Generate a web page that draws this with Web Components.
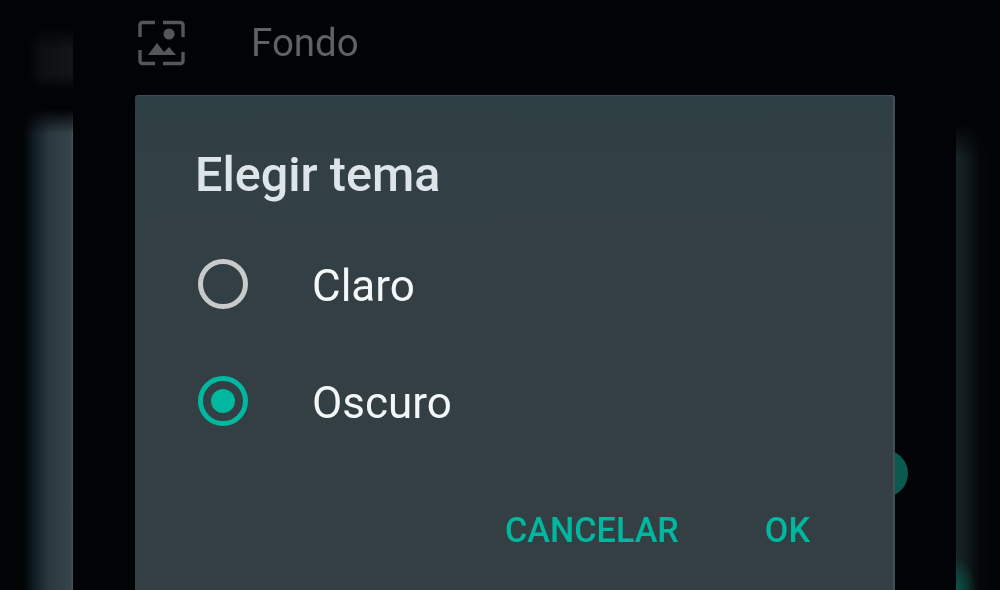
<!DOCTYPE html>
<html lang="es">
<head>
<meta charset="utf-8">
<title>Elegir tema</title>
<style>
  html, body { margin: 0; height: 100%; background: #020307; overflow: hidden; }
  body { font-family: Roboto, "Liberation Sans", sans-serif; }
</style>
</head>
<body>
<settings-screen>
  <setting-row slot="row" label="Fondo"></setting-row>
  <theme-dialog slot="dialog" heading="Elegir tema">
    <theme-option label="Claro"></theme-option>
    <theme-option label="Oscuro" checked></theme-option>
    <dialog-button slot="actions" label="CANCELAR"></dialog-button>
    <dialog-button slot="actions" label="OK"></dialog-button>
  </theme-dialog>
</settings-screen>

<script>
class SettingsScreen extends HTMLElement {
  constructor() {
    super();
    this.attachShadow({ mode: "open" });
    this.shadowRoot.innerHTML = `
      <style>
        :host {
          display: grid;
          grid-template-columns: 73px 1fr 44px;
          height: 590px;
          color: #fff;
        }
        .left {
          display: flex;
          flex-direction: column;
          padding-top: 28px;
        }
        .left .block {
          height: 62px;
          margin-bottom: 20px;
          background:
            linear-gradient(to bottom, #020307 0, rgba(2,3,7,0) 22px, rgba(2,3,7,0) 46px, #020307 62px),
            linear-gradient(to right, #020307 0, #020307 28px, #0d0f12 42px, #131518 100%);
        }
        .left .strip {
          flex: 1;
          background:
            linear-gradient(to bottom, #020307 0, rgba(2,3,7,0) 24px),
            linear-gradient(to right, #020307 0, #020504 24px, #14202a 36px, #2c3a40 50px, #35444a 71px, #4a5659 73px);
        }
        .center {
          display: flex;
          flex-direction: column;
          padding: 0 61px 0 62px;
          position: relative;
        }
        .right { padding-top: 125px; display: flex; }
        .right .strip {
          flex: 1;
          background:
            linear-gradient(to bottom, #020307 0, rgba(2,3,7,0) 32px),
            radial-gradient(ellipse 20px 34px at 0 100%, #0a5549 0, rgba(10,85,73,0) 100%),
            linear-gradient(to right, #182426 0, #0f181a 12px, #040708 24px, #020307 36px);
        }
        .dot {
          position: absolute;
          left: 789px;
          top: 450px;
          width: 46px;
          height: 47px;
          border-radius: 50%;
          background: #0b5a4f;
        }
        ::slotted(theme-dialog) { position: relative; flex: 1; }
      </style>
      <div class="left"><div class="block"></div><div class="strip"></div></div>
      <div class="center">
        <div class="dot"></div>
        <slot name="row"></slot>
        <slot name="dialog"></slot>
      </div>
      <div class="right"><div class="strip"></div></div>
    `;
  }
}
customElements.define("settings-screen", SettingsScreen);

class SettingRow extends HTMLElement {
  constructor() {
    super();
    this.attachShadow({ mode: "open" });
    this.shadowRoot.innerHTML = `
      <style>
        :host {
          display: flex;
          align-items: center;
          height: 95px;
          padding: 0 0 10px 0;
          box-sizing: border-box;
          color: #5f6163;
          font-size: 38.5px;
          filter: blur(0.7px);
        }
        svg { width: 48px; height: 48px; margin-left: 2px; flex: none; }
        span { margin-left: 66px; }
      </style>
      <svg viewBox="0 0 48 48">
        <g fill="none" stroke="#54575a" stroke-width="3.4">
          <path d="M3 18V6a2.5 2.5 0 0 1 2.5-2.5H18"/>
          <path d="M26 3.5H43.5A2.5 2.5 0 0 1 46 6V18"/>
          <path d="M3 31V42a2.5 2.5 0 0 0 2.5 2.5H18"/>
          <path d="M26 44.5H43.5A2.5 2.5 0 0 0 46 42V33"/>
        </g>
        <g fill="#54575a">
          <circle cx="32" cy="15" r="5.5"/>
          <path d="M11 36L20 24L27 33L32 28L39 36Z"/>
        </g>
      </svg>
      <span></span>
    `;
    this.shadowRoot.querySelector("span").textContent = this.getAttribute("label");
  }
}
customElements.define("setting-row", SettingRow);

class ThemeDialog extends HTMLElement {
  constructor() {
    super();
    this.attachShadow({ mode: "open" });
    this.shadowRoot.innerHTML = `
      <style>
        :host {
          display: flex;
          flex-direction: column;
          background: linear-gradient(to bottom, #2e4045 0, #323f44 60px, #343f43 100%);
          border-radius: 4px 4px 0 0;
          box-shadow: inset 0 1px 0 #3f4e52, inset -2px 0 0 #434f54;
          padding: 50px 0 0 60px;
          box-sizing: border-box;
        }
        h2 {
          margin: 0 0 22px;
          font-size: 48.5px;
          line-height: 60px;
          font-weight: 500;
          color: #dde5e9;
          filter: blur(0.6px);
        }
        .options { display: flex; flex-direction: column; }
        .actions {
          display: flex;
          justify-content: flex-end;
          gap: 86px;
          margin-top: 47px;
          padding-right: 85px;
        }
      </style>
      <h2></h2>
      <div class="options"><slot></slot></div>
      <div class="actions"><slot name="actions"></slot></div>
    `;
    this.shadowRoot.querySelector("h2").textContent = this.getAttribute("heading");
  }
}
customElements.define("theme-dialog", ThemeDialog);

class ThemeOption extends HTMLElement {
  constructor() {
    super();
    this.attachShadow({ mode: "open" });
    this.shadowRoot.innerHTML = `
      <style>
        :host {
          display: flex;
          align-items: center;
          height: 117px;
          font-size: 44px;
          color: #f4f7f8;
        }
        .radio {
          width: 50px;
          height: 50px;
          box-sizing: border-box;
          margin: 0 0 3px 3px;
          border: 5px solid #c8cbcc;
          border-radius: 50%;
          display: grid;
          place-items: center;
          filter: blur(0.7px);
        }
        :host([checked]) .radio { border-color: #00b8a0; }
        .dot { width: 24px; height: 24px; border-radius: 50%; background: #00b8a0; display: none; }
        :host([checked]) .dot { display: block; }
        span { margin-left: 64px; filter: blur(0.6px); }
      </style>
      <div class="radio"><div class="dot"></div></div>
      <span></span>
    `;
    this.shadowRoot.querySelector("span").textContent = this.getAttribute("label");
  }
}
customElements.define("theme-option", ThemeOption);

class DialogButton extends HTMLElement {
  constructor() {
    super();
    this.attachShadow({ mode: "open" });
    this.shadowRoot.innerHTML = `
      <style>
        :host {
          display: block;
          font-size: 34.2px;
          line-height: 44px;
          font-weight: 500;
          color: #00b8a0;
          filter: blur(0.6px);
        }
      </style>
      <span></span>
    `;
    this.shadowRoot.querySelector("span").textContent = this.getAttribute("label");
  }
}
customElements.define("dialog-button", DialogButton);
</script>
</body>
</html>
